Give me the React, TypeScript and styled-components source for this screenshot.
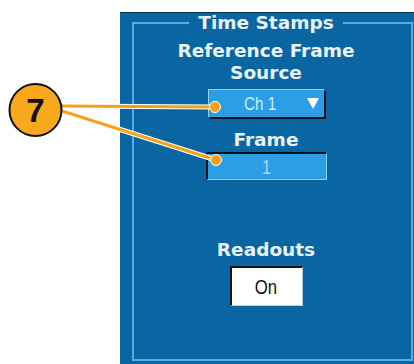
import React from 'react'
import styled, { createGlobalStyle } from 'styled-components'

const GlobalStyle = createGlobalStyle`
    html, body {
        margin: 0;
        padding: 0;
        background: #ffffff;
        overflow: hidden;
    }
`

const Page = styled.div`
    position: relative;
    width: 414px;
    height: 364px;
    display: flex;
    flex-direction: row;
    padding: 12px 0 0 120px;
    box-sizing: border-box;
`

const Panel = styled.div`
    width: 300px;
    height: 360px;
    flex-shrink: 0;
    box-sizing: border-box;
    background-color: #0a66a2;
    border-top: 1px solid #0b3352;
    padding: 0 7px 11px 12px;
    display: flex;
`

const Frame = styled.fieldset`
    flex: 1;
    margin: 0;
    min-inline-size: 0;
    border: 2px solid #5aabe0;
    padding: 7px 13px 0 0;
    display: flex;
    flex-direction: column;
    align-items: center;
`

const Legend = styled.legend`
    margin: 0 auto;
    padding: 0 9px;
    font-family: "DejaVu Sans", Verdana, sans-serif;
    font-weight: bold;
    font-size: 18.5px;
    line-height: 20px;
    color: #e8f3fb;
`

const Label = styled.div<{ $top: number; $lh?: number }>`
    margin-top: ${p => p.$top}px;
    font-family: "DejaVu Sans", Verdana, sans-serif;
    font-weight: bold;
    font-size: 18.5px;
    line-height: ${p => p.$lh ?? 22}px;
    color: #e8f3fb;
    text-align: center;
`

const Dropdown = styled.div`
    margin-top: 5px;
    width: 116px;
    height: 28px;
    box-sizing: border-box;
    background-color: #2c9ee5;
    border-top: 1px solid #8fd0f5;
    border-left: 1px solid #8fd0f5;
    box-shadow: 2px 2px 0 #06121c;
    display: flex;
    align-items: center;
    padding: 0 5px 0 4px;
`

const NarrowText = styled.span<{ $color: string; $size: number }>`
    display: inline-block;
    font-family: "Liberation Sans", Arial, sans-serif;
    font-size: ${p => p.$size}px;
    color: ${p => p.$color};
    line-height: 1;
    transform: scaleX(0.8);
`

const DropdownValue = styled.div`
    flex: 1;
    display: flex;
    justify-content: center;
`

const Input = styled.div`
    margin-top: 4px;
    width: 121px;
    height: 28px;
    box-sizing: border-box;
    background-color: #2c9ee5;
    border-top: 2px solid #06121c;
    border-left: 2px solid #06121c;
    border-right: 1px solid #8fd0f5;
    border-bottom: 1px solid #8fd0f5;
    display: flex;
    align-items: center;
    justify-content: center;
`

const ToggleButton = styled.div`
    margin-top: 8px;
    width: 73px;
    height: 40px;
    box-sizing: border-box;
    background-color: #ffffff;
    border-top: 2px solid #111111;
    border-left: 2px solid #111111;
    border-right: 1px solid #b8cfe0;
    border-bottom: 1px solid #b8cfe0;
    display: flex;
    align-items: center;
    justify-content: center;
`

const Callout = styled.svg`
    position: absolute;
    left: 0;
    top: 0;
    pointer-events: none;
`

const CalloutNumber = styled.text`
    font-family: "Liberation Sans", Arial, sans-serif;
    font-weight: bold;
    font-size: 33px;
    fill: #111111;
`

const leaders = [
    { x1: 62, y1: 106, x2: 215, y2: 107 },
    { x1: 62, y1: 111, x2: 216, y2: 160 },
]

const App = () => {
    return (
        <>
            <GlobalStyle />
            <Page>
                <Panel>
                    <Frame>
                        <Legend>Time Stamps</Legend>
                        <Label $top={0}>Reference Frame<br />Source</Label>
                        <Dropdown>
                            <DropdownValue>
                                <NarrowText $color="#d8ecf8" $size={19}>Ch 1</NarrowText>
                            </DropdownValue>
                            <svg width="12" height="13" viewBox="0 0 12 13">
                                <polygon points="0,1 12,1 6,12" fill="#ffffff" />
                            </svg>
                        </Dropdown>
                        <Label $top={15} $lh={16}>Frame</Label>
                        <Input>
                            <NarrowText $color="#a9d5f2" $size={20}>1</NarrowText>
                        </Input>
                        <Label $top={62} $lh={16}>Readouts</Label>
                        <ToggleButton>
                            <NarrowText $color="#111111" $size={21}>On</NarrowText>
                        </ToggleButton>
                    </Frame>
                </Panel>

                <Callout width="414" height="364" viewBox="0 0 414 364">
                    {leaders.map((l, i) => (
                        <g key={i}>
                            <line x1={l.x1} y1={l.y1} x2={l.x2} y2={l.y2} stroke="#ffffff" strokeWidth="5" />
                            <line x1={l.x1} y1={l.y1} x2={l.x2} y2={l.y2} stroke="#f5a21a" strokeWidth="3" />
                            <circle cx={l.x2} cy={l.y2} r="5.5" fill="#f5a21a" stroke="#ffffff" strokeWidth="1" />
                        </g>
                    ))}
                    <circle cx="35.5" cy="110" r="26" fill="#f7a81c" stroke="#111111" strokeWidth="2" />
                    <CalloutNumber x="35.5" y="121.5" textAnchor="middle">7</CalloutNumber>
                </Callout>
            </Page>
        </>
    )
}

export default App
